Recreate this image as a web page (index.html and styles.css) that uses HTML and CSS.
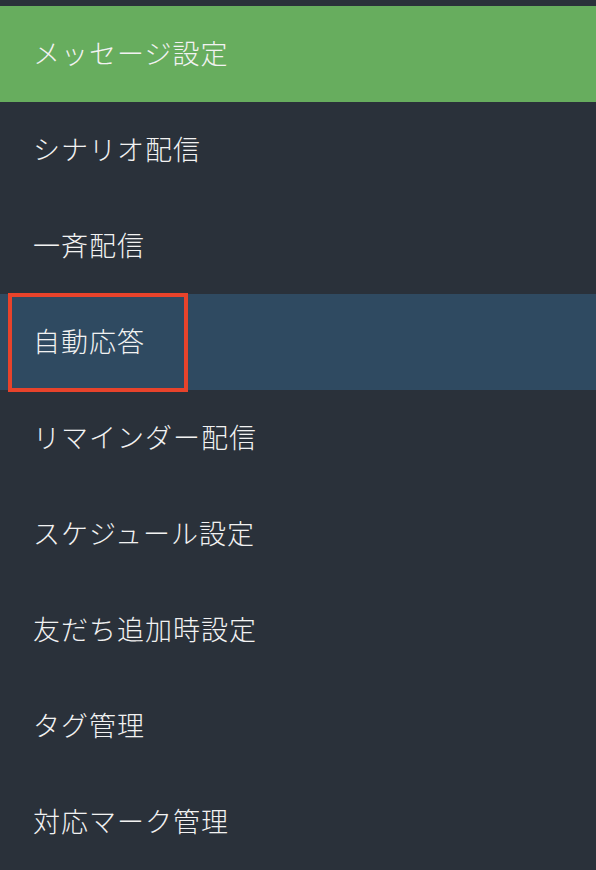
FILE: index.html
```html
<!DOCTYPE html>
<html lang="ja">
<head>
<meta charset="utf-8">
<link rel="stylesheet" href="styles.css">
</head>
<body>
<nav class="menu">
  <div class="item header">メッセージ設定</div>
  <div class="item">シナリオ配信</div>
  <div class="item">一斉配信</div>
  <div class="item active">自動応答<span class="highlight"></span></div>
  <div class="item">リマインダー配信</div>
  <div class="item">スケジュール設定</div>
  <div class="item">友だち追加時設定</div>
  <div class="item">タグ管理</div>
  <div class="item">対応マーク管理</div>
</nav>
</body>
</html>
```
FILE: styles.css
```css
html, body {
  margin: 0;
  padding: 0;
  background: #2a313a;
}
body {
  width: 596px;
  height: 870px;
  overflow: hidden;
  font-family: "Noto Sans CJK JP", "Noto Sans", sans-serif;
}
.menu {
  padding-top: 6px;
  display: flex;
  flex-direction: column;
}
.item {
  position: relative;
  height: 96px;
  display: flex;
  align-items: center;
  padding-left: 33px;
  padding-bottom: 3px;
  color: #f2f2f2;
  font-size: 27px;
  font-weight: 300;
  letter-spacing: 1px;
  box-sizing: border-box;
}
.header {
  background: #67ad5e;
}
.active {
  background: #2f4a61;
}
.highlight {
  position: absolute;
  left: 8px;
  top: -1px;
  width: 180px;
  height: 99px;
  border: 4px solid #e8432b;
  box-sizing: border-box;
}
```
